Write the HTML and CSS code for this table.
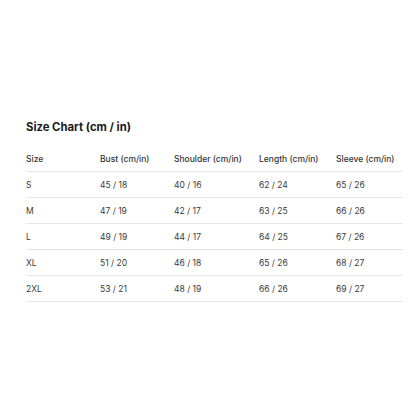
FILE: index.html
```html
<!DOCTYPE html>
<html lang="en">
<head>
<meta charset="utf-8">
<link rel="stylesheet" href="styles.css">
</head>
<body>
<main class="chart">
  <h1 class="title">Size Chart (cm / in)</h1>
  <div class="table">
    <div class="row head">
      <span>Size</span><span>Bust (cm/in)</span><span>Shoulder (cm/in)</span><span>Length (cm/in)</span><span>Sleeve (cm/in)</span>
    </div>
    <div class="row">
      <span>S</span><span>45 / 18</span><span>40 / 16</span><span>62 / 24</span><span>65 / 26</span>
    </div>
    <div class="row">
      <span>M</span><span>47 / 19</span><span>42 / 17</span><span>63 / 25</span><span>66 / 26</span>
    </div>
    <div class="row">
      <span>L</span><span>49 / 19</span><span>44 / 17</span><span>64 / 25</span><span>67 / 26</span>
    </div>
    <div class="row">
      <span>XL</span><span>51 / 20</span><span>46 / 18</span><span>65 / 26</span><span>68 / 27</span>
    </div>
    <div class="row">
      <span>2XL</span><span>53 / 21</span><span>48 / 19</span><span>66 / 26</span><span>69 / 27</span>
    </div>
  </div>
</main>
</body>
</html>
```
FILE: styles.css
```css
html, body {
  margin: 0;
  padding: 0;
  background: #ffffff;
}
body {
  font-family: Inter, "Noto Sans", sans-serif;
  color: #333333;
  width: 416px;
  height: 416px;
  overflow: hidden;
}
.chart {
  padding: 119px 13px 0 26px;
}
.title {
  margin: 0 0 11px 0;
  font-size: 11.3px;
  line-height: 16px;
  font-weight: 700;
  color: #1a1a1a;
}
.table {
  display: flex;
  flex-direction: column;
}
.row {
  display: grid;
  grid-template-columns: 74px 74px 85px 77px 1fr;
  height: 26px;
  align-items: center;
  border-bottom: 1px solid #e6e6e6;
  box-sizing: border-box;
  font-size: 8.5px;
  color: #3a3a3a;
}
.row.head {
  color: #333333;
  font-weight: 500;
}
```
